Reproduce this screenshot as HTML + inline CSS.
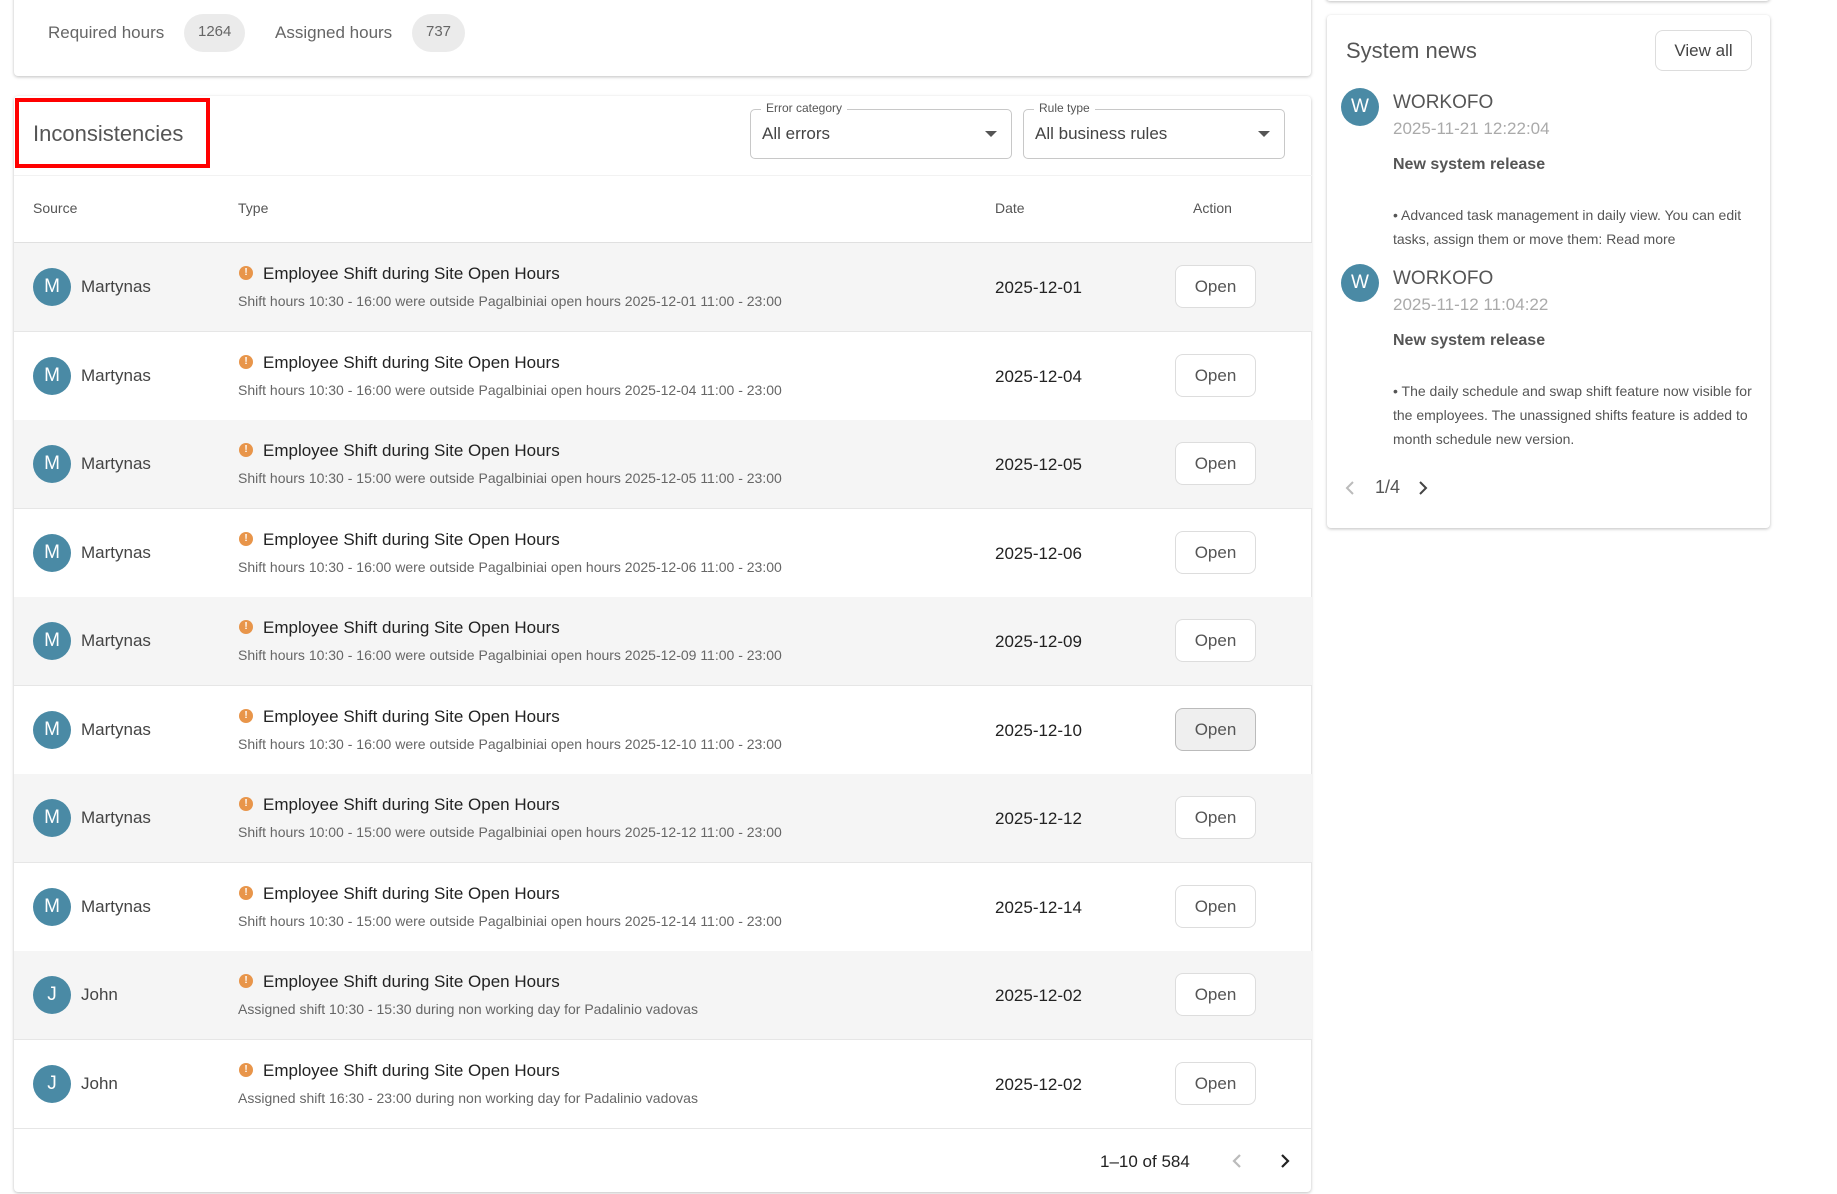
<!DOCTYPE html>
<html><head><meta charset="utf-8"><style>
*{box-sizing:border-box;margin:0;padding:0}
body{width:1837px;height:1194px;background:#fff;font-family:"Liberation Sans",sans-serif;color:#222;position:relative;overflow:hidden}
.abs{position:absolute}
.card{position:absolute;background:#fff;border-radius:4px;box-shadow:0 1px 3px rgba(0,0,0,.25)}
.pill{display:inline-block;background:#ebebeb;border-radius:20px;color:#666;font-size:15px;padding:0 14px;height:38px;line-height:36px}
.row{position:absolute;left:14px;width:1298px;height:89px;border-bottom:1px solid #e6e6e6}
.row.g{background:#f5f5f5}
.av{position:absolute;width:38px;height:38px;border-radius:50%;background:#4a8aa5;color:#fff;font-size:19px;text-align:center;line-height:38px}
.name{position:absolute;left:67px;top:34px;font-size:17px;color:#444}
.ic{position:absolute;left:225px;top:23px;width:14px;height:14px;border-radius:50%;background:#e8954a;color:#fff;font-size:10px;font-weight:bold;text-align:center;line-height:14px}
.t{position:absolute;left:249px;top:21px;font-size:17px;color:#222}
.s{position:absolute;left:224px;top:50px;font-size:14px;color:#666}
.d{position:absolute;left:981px;top:35px;font-size:17px;color:#222}
.btn{position:absolute;left:1161px;top:22px;width:81px;height:43px;border:1px solid #ddd;border-radius:8px;background:#fff;font-size:17px;color:#555;text-align:center;line-height:41px}
.sel{position:absolute;top:109px;height:50px;border:1px solid #c8c8c8;border-radius:5px}
.sel .lb{position:absolute;top:-9px;left:10px;background:#fff;padding:0 5px;font-size:12px;color:#555}
.sel .v{position:absolute;left:11px;top:14px;font-size:17px;color:#444}
.sel .ar{position:absolute;right:14px;top:21px;border:6px solid transparent;border-top:6px solid #555;border-bottom:0}
</style></head><body>

<div class="card" style="left:14px;top:-10px;width:1297px;height:86px">
 <div class="abs" style="left:34px;top:33px;font-size:17px;color:#666">Required hours</div>
 <div class="abs pill" style="left:170px;top:24px">1264</div>
 <div class="abs" style="left:261px;top:33px;font-size:17px;color:#666">Assigned hours</div>
 <div class="abs pill" style="left:398px;top:24px">737</div>
</div>

<div class="card" style="left:14px;top:96px;width:1297px;height:1096px"></div>
<div class="abs" style="left:15px;top:98px;width:195px;height:70px;border:4px solid #f00"></div>
<div class="abs" style="left:33px;top:121px;font-size:22px;color:#555">Inconsistencies</div>
<div class="sel" style="left:750px;width:262px"><span class="lb">Error category</span><span class="v">All errors</span><span class="ar"></span></div>
<div class="sel" style="left:1023px;width:262px"><span class="lb">Rule type</span><span class="v">All business rules</span><span class="ar"></span></div>
<div class="abs" style="left:14px;top:175px;width:1298px;border-top:1px solid #f2f2f2"></div>
<div class="abs" style="left:33px;top:200px;font-size:14px;color:#555">Source</div>
<div class="abs" style="left:238px;top:200px;font-size:14px;color:#555">Type</div>
<div class="abs" style="left:995px;top:200px;font-size:14px;color:#555">Date</div>
<div class="abs" style="left:1193px;top:200px;font-size:14px;color:#555">Action</div>
<div class="abs" style="left:14px;top:242px;width:1298px;border-top:1px solid #e0e0e0"></div>

<div class="row g" style="top:243px"><div class="av" style="left:19px;top:25px">M</div><div class="name">Martynas</div><div class="ic">!</div><div class="t">Employee Shift during Site Open Hours</div><div class="s">Shift hours 10:30 - 16:00 were outside Pagalbiniai open hours 2025-12-01 11:00 - 23:00</div><div class="d">2025-12-01</div><div class="btn">Open</div></div>
<div class="row" style="top:332px"><div class="av" style="left:19px;top:25px">M</div><div class="name">Martynas</div><div class="ic">!</div><div class="t">Employee Shift during Site Open Hours</div><div class="s">Shift hours 10:30 - 16:00 were outside Pagalbiniai open hours 2025-12-04 11:00 - 23:00</div><div class="d">2025-12-04</div><div class="btn">Open</div></div>
<div class="row g" style="top:420px"><div class="av" style="left:19px;top:25px">M</div><div class="name">Martynas</div><div class="ic">!</div><div class="t">Employee Shift during Site Open Hours</div><div class="s">Shift hours 10:30 - 15:00 were outside Pagalbiniai open hours 2025-12-05 11:00 - 23:00</div><div class="d">2025-12-05</div><div class="btn">Open</div></div>
<div class="row" style="top:509px"><div class="av" style="left:19px;top:25px">M</div><div class="name">Martynas</div><div class="ic">!</div><div class="t">Employee Shift during Site Open Hours</div><div class="s">Shift hours 10:30 - 16:00 were outside Pagalbiniai open hours 2025-12-06 11:00 - 23:00</div><div class="d">2025-12-06</div><div class="btn">Open</div></div>
<div class="row g" style="top:597px"><div class="av" style="left:19px;top:25px">M</div><div class="name">Martynas</div><div class="ic">!</div><div class="t">Employee Shift during Site Open Hours</div><div class="s">Shift hours 10:30 - 16:00 were outside Pagalbiniai open hours 2025-12-09 11:00 - 23:00</div><div class="d">2025-12-09</div><div class="btn">Open</div></div>
<div class="row" style="top:686px"><div class="av" style="left:19px;top:25px">M</div><div class="name">Martynas</div><div class="ic">!</div><div class="t">Employee Shift during Site Open Hours</div><div class="s">Shift hours 10:30 - 16:00 were outside Pagalbiniai open hours 2025-12-10 11:00 - 23:00</div><div class="d">2025-12-10</div><div class="btn" style="background:#efefef;border-color:#bbb">Open</div></div>
<div class="row g" style="top:774px"><div class="av" style="left:19px;top:25px">M</div><div class="name">Martynas</div><div class="ic">!</div><div class="t">Employee Shift during Site Open Hours</div><div class="s">Shift hours 10:00 - 15:00 were outside Pagalbiniai open hours 2025-12-12 11:00 - 23:00</div><div class="d">2025-12-12</div><div class="btn">Open</div></div>
<div class="row" style="top:863px"><div class="av" style="left:19px;top:25px">M</div><div class="name">Martynas</div><div class="ic">!</div><div class="t">Employee Shift during Site Open Hours</div><div class="s">Shift hours 10:30 - 15:00 were outside Pagalbiniai open hours 2025-12-14 11:00 - 23:00</div><div class="d">2025-12-14</div><div class="btn">Open</div></div>
<div class="row g" style="top:951px"><div class="av" style="left:19px;top:25px">J</div><div class="name">John</div><div class="ic">!</div><div class="t">Employee Shift during Site Open Hours</div><div class="s">Assigned shift 10:30 - 15:30 during non working day for Padalinio vadovas</div><div class="d">2025-12-02</div><div class="btn">Open</div></div>
<div class="row" style="top:1040px"><div class="av" style="left:19px;top:25px">J</div><div class="name">John</div><div class="ic">!</div><div class="t">Employee Shift during Site Open Hours</div><div class="s">Assigned shift 16:30 - 23:00 during non working day for Padalinio vadovas</div><div class="d">2025-12-02</div><div class="btn">Open</div></div>

<div class="abs" style="left:1100px;top:1152px;font-size:17px;color:#222">1–10 of 584</div>
<svg class="abs" style="left:1230px;top:1152px" width="14" height="18"><path d="M10 3 L4 9 L10 15" stroke="#bbb" stroke-width="2.2" fill="none"/></svg>
<svg class="abs" style="left:1278px;top:1152px" width="14" height="18"><path d="M4 3 L10 9 L4 15" stroke="#222" stroke-width="2.2" fill="none"/></svg>

<div class="card" style="left:1326px;top:-10px;width:444px;height:11px"></div>
<div class="card" style="left:1327px;top:15px;width:443px;height:513px">
 <div class="abs" style="left:19px;top:23px;font-size:22px;color:#555">System news</div>
 <div class="abs" style="left:328px;top:15px;width:97px;height:41px;border:1px solid #ddd;border-radius:8px;text-align:center;line-height:39px;font-size:17px;color:#444">View all</div>
 <div class="av" style="left:14px;top:73px">W</div>
 <div class="abs" style="left:66px;top:77px;font-size:19px;color:#555">WORKOFO</div>
 <div class="abs" style="left:66px;top:104px;font-size:17px;color:#aaa">2025-11-21 12:22:04</div>
 <div class="abs" style="left:66px;top:141px;font-size:16px;font-weight:bold;color:#555">New system release</div>
 <div class="abs" style="left:66px;top:188px;width:352px;font-size:14px;line-height:24px;color:#555">• Advanced task management in daily view. You can edit tasks, assign them or move them: Read more</div>
 <div class="av" style="left:14px;top:249px">W</div>
 <div class="abs" style="left:66px;top:253px;font-size:19px;color:#555">WORKOFO</div>
 <div class="abs" style="left:66px;top:280px;font-size:17px;color:#aaa">2025-11-12 11:04:22</div>
 <div class="abs" style="left:66px;top:317px;font-size:16px;font-weight:bold;color:#555">New system release</div>
 <div class="abs" style="left:66px;top:364px;width:362px;font-size:14px;line-height:24px;color:#555">• The daily schedule and swap shift feature now visible for the employees. The unassigned shifts feature is added to month schedule new version.</div>
 <svg class="abs" style="left:16px;top:464px" width="14" height="18"><path d="M10 3 L4 9 L10 15" stroke="#bbb" stroke-width="2" fill="none"/></svg>
 <div class="abs" style="left:48px;top:462px;font-size:18px;color:#555">1/4</div>
 <svg class="abs" style="left:89px;top:464px" width="14" height="18"><path d="M4 3 L10 9 L4 15" stroke="#444" stroke-width="2" fill="none"/></svg>
</div>
</body></html>
